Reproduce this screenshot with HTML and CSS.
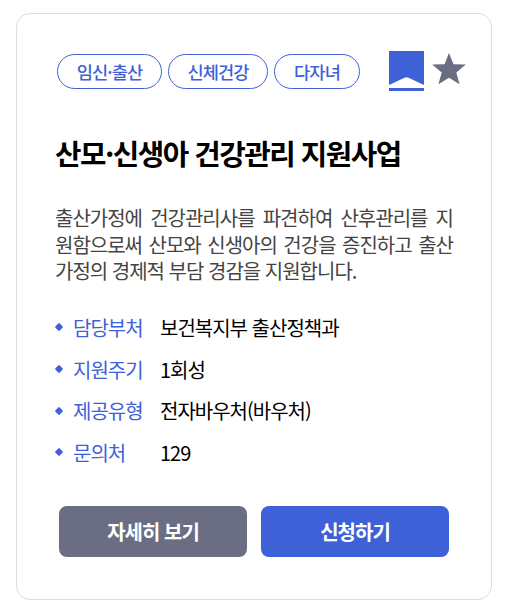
FILE: index.html
```html
<!DOCTYPE html>
<html lang="ko">
<head>
<meta charset="utf-8">
<title>산모·신생아 건강관리 지원사업</title>
<link rel="stylesheet" href="styles.css">
</head>
<body>
<article class="card">
  <header class="top">
    <ul class="tags"><li class="tag t1"><span>임신·출산</span></li><li class="tag t2"><span>신체건강</span></li><li class="tag t3"><span>다자녀</span></li></ul>
    <svg class="bookmark" width="35" height="40" viewBox="0 0 35 40"><path d="M0 0H35V34L19.500 26.800Q17.500 25.800 15.500 26.800L0 34Z" fill="#3e61d7"/><path d="M0 37H35V40H0Z" fill="#3e61d7"/></svg>
    <svg class="star" width="34" height="32" viewBox="0 0 34 32"><path d="M17 0L21.500 11.200L33.800 11.600L24.300 19.500L27.600 31.200L17 24.700L6.400 31.200L9.700 19.500L0.200 11.600L12.500 11.200Z" fill="#6b6e83"/></svg>
  </header>
  <h2 class="title">산모·신생아 건강관리 지원사업</h2>
  <div class="desc"><p class="j">출산가정에 건강관리사를 파견하여 산후관리를 지</p><p class="j">원함으로써 산모와 신생아의 건강을 증진하고 출산</p><p>가정의 경제적 부담 경감을 지원합니다.</p></div>
  <dl class="info">
    <div class="row"><dt>담당부처</dt><dd>보건복지부 출산정책과</dd></div>
    <div class="row"><dt>지원주기</dt><dd>1회성</dd></div>
    <div class="row"><dt>제공유형</dt><dd>전자바우처(바우처)</dd></div>
    <div class="row"><dt>문의처</dt><dd>129</dd></div>
  </dl>
  <div class="actions"><button class="btn gray">자세히 보기</button><button class="btn">신청하기</button></div>
</article>
</body>
</html>
```
FILE: styles.css
```css
* { box-sizing: border-box; margin: 0; padding: 0; }
body { background: #fff; font-family: "Noto Sans CJK KR", sans-serif; color: #000; padding: 13px 15px 13px 16px; }
.card { width: 476px; height: 587px; border: 1px solid #ddd; border-radius: 14px; padding: 37px 25px 0 38px; }
.top { display: flex; height: 40px; }
.tags { display: flex; gap: 6px; list-style: none; margin: 3px 0 0 2px; }
.tag { height: 35px; border: 1px solid #3e61d7; border-radius: 18px; color: #3e61d7; font-size: 17.6px; font-weight: 500; letter-spacing: -0.05em; line-height: 33px; text-align: center; white-space: nowrap; }
.t1 { width: 105px; }
.t2 { width: 100px; }
.t3 { width: 86px; }
.bookmark { margin-left: 29px; }
.star { margin: 2px 0 0 8px; }
.title { margin-top: 42px; height: 40px; font-size: 28.8px; line-height: 40px; font-weight: 700; letter-spacing: -1.52px; white-space: nowrap; }
.desc { margin-top: 32px; width: 398px; font-size: 20px; line-height: 26.7px; letter-spacing: -0.05em; color: #444; }
.desc p { white-space: nowrap; }
.desc .j { text-align-last: justify; }
.info { margin-top: 21.5px; font-size: 20px; letter-spacing: -0.05em; }
.row { display: flex; align-items: center; height: 41.6px; }
.row::before { content: ""; width: 6px; height: 6px; margin-left: 1px; border-radius: 1px; background: #3e61d7; transform: rotate(45deg); }
.row dt { width: 87px; margin-left: 11px; color: #3e61d7; }
.actions { display: flex; gap: 14px; margin: 33.500px 0 0 4px; }
.btn { width: 188px; height: 51px; border: 0; border-radius: 8px; background: #3e61d7; color: #fff; font: 700 20px/51px "Noto Sans CJK KR", sans-serif; letter-spacing: -0.05em; }
.gray { background: #6b6e83; }
```
